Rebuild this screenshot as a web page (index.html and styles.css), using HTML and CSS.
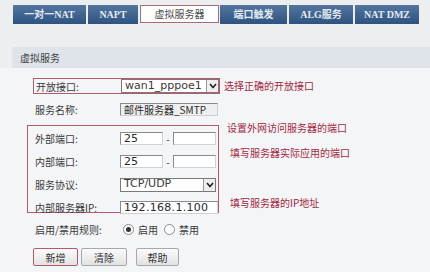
FILE: index.html
```html
<!DOCTYPE html>
<html lang="zh-CN">
<head>
  <meta charset="UTF-8">
  <title>虚拟服务器</title>
  <link rel="stylesheet" href="styles.css">
</head>
<body>
  <!-- Tabs -->
  <div class="tabs">
    <div class="tab w1">一对一NAT</div>
    <div class="tab w2">NAPT</div>
    <div class="tab active w3">虚拟服务器</div>
    <div class="tab w4">端口触发</div>
    <div class="tab w5">ALG服务</div>
    <div class="tab w6">NAT DMZ</div>
  </div>

  <div class="title">虚拟服务</div>

  <div class="form">
    <div class="line first">
      <div class="pick">
        <span class="label">开放接口:</span>
        <div class="select wide">
          <span class="val">wan1_pppoe1</span>
          <span class="arrow"><svg width="8" height="6" viewBox="0 0 8 6"><path d="M1 1 L4 4.5 L7 1" fill="none" stroke="#222" stroke-width="1.6"/></svg></span>
        </div>
      </div>
      <span class="note n1">选择正确的开放接口</span>
    </div>

    <div class="line plain">
      <span class="label">服务名称:</span>
      <div class="input name">邮件服务器_SMTP</div>
    </div>

    <div class="line">
      <div class="group">
        <div class="row">
          <span class="label">外部端口:</span>
          <div class="input port">25</div>
          <span class="dash">-</span>
          <div class="input port2"></div>
        </div>
        <div class="row">
          <span class="label">内部端口:</span>
          <div class="input port">25</div>
          <span class="dash">-</span>
          <div class="input port2"></div>
        </div>
        <div class="row">
          <span class="label">服务协议:</span>
          <div class="select proto">
            <span class="val">TCP/UDP</span>
            <span class="arrow"><svg width="8" height="6" viewBox="0 0 8 6"><path d="M1 1 L4 4.5 L7 1" fill="none" stroke="#222" stroke-width="1.6"/></svg></span>
          </div>
        </div>
        <div class="row">
          <span class="label">内部服务器IP:</span>
          <div class="input ip">192.168.1.100</div>
        </div>
      </div>
      <div class="notes">
        <span class="note n2">设置外网访问服务器的端口</span>
        <span class="note n3">填写服务器实际应用的端口</span>
        <span class="note n4">填写服务器的IP地址</span>
      </div>
    </div>

    <div class="line radios">
      <span class="label">启用/禁用规则:</span>
      <span class="radio on"></span><span class="rtext">启用</span>
      <span class="radio"></span><span class="rtext">禁用</span>
    </div>

    <div class="buttons">
      <button class="btn add">新增</button>
      <button class="btn clear">清除</button>
      <button class="btn help">帮助</button>
    </div>
  </div>
</body>
</html>
```

FILE: styles.css
```css
body {
  margin: 0;
  font-family: "Noto Sans CJK SC", sans-serif;
  font-size: 10px;
  color: #3a3a3a;
  background-color: #f4f5f6;
}

/* Tabs */
.tabs {
  display: flex;
  padding: 5px 0 0 13px;
  background-color: #eceef0;
  height: 19px;
}

.tab {
  height: 19px;
  line-height: 19px;
  margin-right: 2px;
  text-align: center;
  font-family: "Liberation Serif", "Noto Sans CJK SC", serif;
  font-weight: bold;
  font-size: 10px;
  color: #e4ebf3;
  background: linear-gradient(#52769f, #2f5380);
  box-sizing: border-box;
}

.tab.active {
  background: #ffffff;
  border: 1px solid #a86c70;
  color: #4a4a4a;
  font-weight: normal;
  font-family: "Noto Sans CJK SC", sans-serif;
  font-size: 10px;
  line-height: 16px;
  height: 18px;
  margin-right: 1px;
}

.w1 { width: 73px; }
.w2 { width: 50px; }
.w3 { width: 79px; }
.w4 { width: 67px; }
.w5 { width: 64px; }
.w6 { width: 64px; }

/* Section title */
.title {
  border-top: 23px solid #eceef0;
  padding-left: 20px;
  height: 21px;
  line-height: 21px;
  background: linear-gradient(to right, #eceef0 12px, #dfe4ea 12px);
  color: #3c3c3c;
}

/* Form */
.form {
  padding-left: 27px;
}

.line {
  display: flex;
}

.first {
  margin-top: 10px;
  align-items: center;
}

.pick {
  display: flex;
  align-items: center;
  margin-left: 6px;
  width: 185px;
  height: 14px;
  border: 1px solid #b45a68;
}

.pick .label {
  width: 85px;
  padding-left: 2px;
}

.label {
  width: 85px;
  flex-shrink: 0;
  white-space: nowrap;
}

.select {
  display: flex;
  justify-content: space-between;
  align-items: center;
  box-sizing: border-box;
  height: 14px;
  border: 1px solid #7a7a7a;
  background: #ffffff;
  font-family: "DejaVu Sans", sans-serif;
  font-size: 11px;
  padding-left: 3px;
}

.select .val {
  line-height: 12px;
  margin-top: -1px;
  white-space: nowrap;
}

.select.wide {
  width: 98px;
}

.select.proto {
  width: 96px;
}

.arrow {
  display: flex;
  align-items: center;
  justify-content: center;
  width: 11px;
  height: 12px;
  flex-shrink: 0;
  border-left: 1px solid #9a9a9a;
  background: #eeeeee;
}

.note {
  color: #a3283f;
  font-size: 10px;
  line-height: 14px;
  white-space: nowrap;
}

.n1 {
  margin-left: 4px;
}

.plain {
  margin-top: 9px;
  padding-left: 8px;
  align-items: center;
  height: 13px;
}

.input {
  box-sizing: border-box;
  height: 13px;
  line-height: 11px;
  border: 1px solid #8a8a8a;
  border-right-color: #d0d0d0;
  border-bottom-color: #d0d0d0;
  background: #ffffff;
  padding-left: 3px;
  font-family: "DejaVu Sans", sans-serif;
  font-size: 11px;
  color: #2a2a2a;
}

.input.name {
  width: 98px;
  background: #efefef;
  font-family: "Noto Sans CJK SC", sans-serif;
  font-size: 10px;
}

.group {
  margin-top: 9px;
  width: 192px;
  height: 88px;
  box-sizing: border-box;
  border: 1px solid #b45a68;
  padding: 1px 0 0 7px;
}

.row {
  display: flex;
  align-items: center;
  height: 23px;
}

.input.port {
  width: 43px;
}

.dash {
  width: 10px;
  text-align: center;
}

.input.port2 {
  width: 43px;
}

.input.ip {
  width: 98px;
  letter-spacing: 0.3px;
}

.notes {
  display: flex;
  flex-direction: column;
  margin-top: 5px;
}

.n2 {
  margin-left: 8px;
}

.n3 {
  margin-left: 11px;
  margin-top: 11px;
}

.n4 {
  margin-left: 11px;
  margin-top: 36px;
}

.radios {
  margin-top: 8px;
  padding-left: 8px;
  height: 16px;
  align-items: center;
}

.radios .label {
  width: 88px;
}

.radio {
  width: 9px;
  height: 9px;
  border: 1px solid #8a8a8a;
  border-radius: 50%;
  background: #ffffff;
  position: relative;
}

.radio.on::after {
  content: "";
  position: absolute;
  left: 2px;
  top: 2px;
  width: 5px;
  height: 5px;
  border-radius: 50%;
  background: #333;
}

.rtext {
  margin: 0 6px 0 4px;
}

/* Buttons */
.buttons {
  display: flex;
  margin-top: 11px;
  padding-left: 6px;
}

.btn {
  height: 18px;
  padding: 0;
  font-family: "Noto Sans CJK SC", sans-serif;
  font-size: 10px;
  color: #333;
  background: linear-gradient(#fbfbfb, #e2e2e2);
  border: 1px solid #a8a8a8;
  border-radius: 2px;
}

.btn.add {
  width: 45px;
  border-color: #b45a68;
}

.btn.clear {
  width: 46px;
  margin-left: 3px;
}

.btn.help {
  width: 43px;
  margin-left: 9px;
}
```
